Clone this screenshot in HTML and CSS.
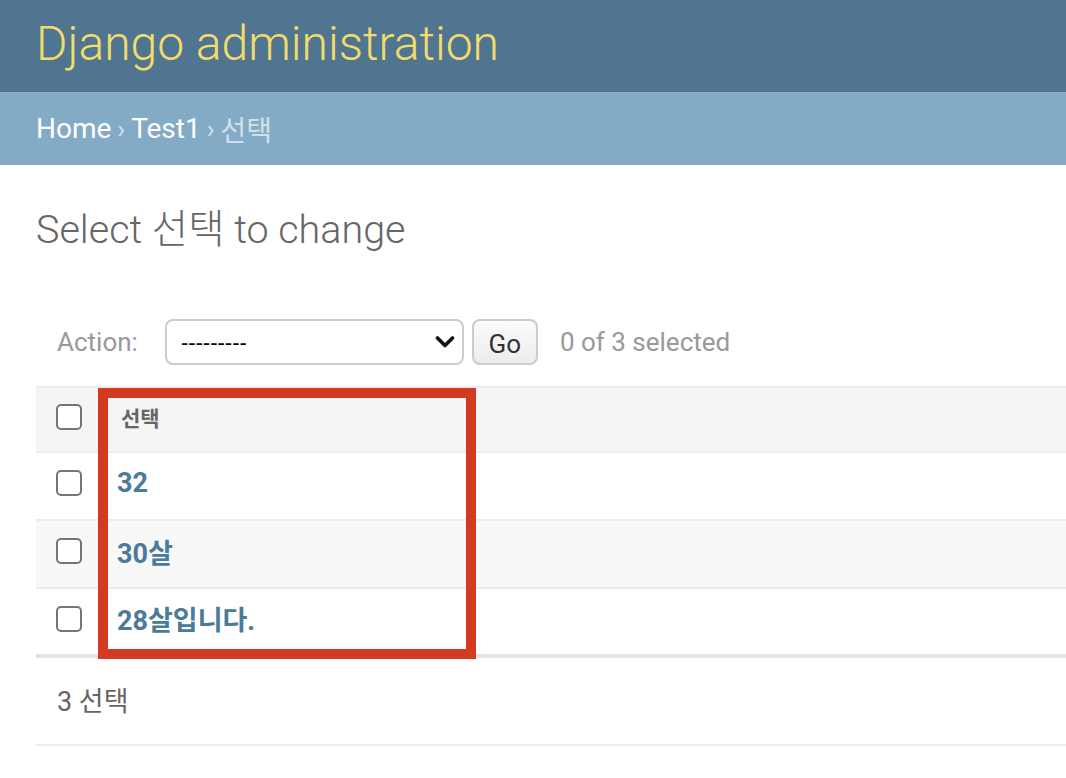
FILE: index.html
```html
<!DOCTYPE html>
<html lang="ko">
<head>
<meta charset="utf-8">
<title>Select 선택 to change | Django site admin</title>
<link rel="stylesheet" href="styles.css">
</head>
<body>
<header class="header">
  <div class="branding">Django administration</div>
</header>
<nav class="breadcrumbs">
  <a href="#">Home</a><span class="sep">›</span><a href="#">Test1</a><span class="sep">›</span><span class="current">선택</span>
</nav>
<main class="content">
  <h1 class="title">Select 선택 to change</h1>
  <div class="actions">
    <label class="action-label">Action:</label>
    <div class="select-wrap">
      <select class="action-select">
        <option>---------</option>
      </select>
      <svg class="chevron" viewBox="0 0 20 14" width="20" height="14" aria-hidden="true">
        <path d="M2.5 3 L10 10.5 L17.5 3" fill="none" stroke="#111" stroke-width="3.6" stroke-linecap="round" stroke-linejoin="round"/>
      </svg>
    </div>
    <button class="go">Go</button>
    <span class="counter">0 of 3 selected</span>
  </div>
  <div class="results">
    <table class="result-list">
      <thead>
        <tr>
          <th class="cb-cell"><input type="checkbox" class="cb"></th>
          <th class="name-head">선택</th>
        </tr>
      </thead>
      <tbody>
        <tr class="row1">
          <td class="cb-cell"><input type="checkbox" class="cb"></td>
          <td class="name-cell"><a href="#">32</a></td>
        </tr>
        <tr class="row2">
          <td class="cb-cell"><input type="checkbox" class="cb"></td>
          <td class="name-cell"><a href="#">30살</a></td>
        </tr>
        <tr class="row1 last">
          <td class="cb-cell"><input type="checkbox" class="cb"></td>
          <td class="name-cell"><a href="#">28살입니다.</a></td>
        </tr>
      </tbody>
    </table>
    <div class="highlight"></div>
  </div>
  <p class="paginator">3 선택</p>
</main>
</body>
</html>
```

FILE: styles.css
```css
html, body {
  margin: 0;
  padding: 0;
  background: #fff;
}
body {
  font-family: Roboto, "Noto Sans CJK KR", "Liberation Sans", sans-serif;
  color: #333;
  width: 1066px;
  overflow: hidden;
}
.header {
  height: 92px;
  background: #4f7591;
  display: flex;
  align-items: center;
  padding-left: 36px;
}
.branding {
  color: #f3dc6b;
  font-size: 48px;
  font-weight: 300;
  line-height: 1;
  margin-top: -4px;
}
.breadcrumbs {
  height: 73px;
  background: #84abc6;
  display: flex;
  align-items: center;
  padding-left: 36px;
  font-size: 28px;
  color: #fff;
}
.breadcrumbs a {
  color: #fff;
  text-decoration: none;
}
.breadcrumbs .sep {
  color: #d3e4ee;
  margin: 0 6px;
  font-size: 26px;
}
.breadcrumbs .current {
  color: #cfe0ea;
}
.content {
  padding: 38px 0 0 36px;
}
.title {
  margin: 0;
  font-size: 39.5px;
  font-weight: 300;
  line-height: 54px;
  color: #666;
}
.actions {
  margin-top: 62px;
  height: 46px;
  display: flex;
  align-items: center;
  padding-left: 21px;
  color: #999;
  font-size: 26px;
}
.action-label {
  margin-right: 27px;
}
.select-wrap {
  position: relative;
  width: 299px;
  height: 46px;
}
.action-select {
  appearance: none;
  -webkit-appearance: none;
  width: 100%;
  height: 100%;
  border: 2px solid #ccc;
  border-radius: 8px;
  background: #fff;
  padding: 0 14px;
  font-family: "Liberation Sans", sans-serif;
  font-size: 22px;
  color: #000;
  box-sizing: border-box;
}
.chevron {
  position: absolute;
  right: 9px;
  top: 16px;
}
.go {
  margin-left: 8px;
  width: 66px;
  height: 46px;
  border: 2px solid #ccc;
  border-radius: 8px;
  background: linear-gradient(#fbfbfb, #ececec);
  font-family: Roboto, sans-serif;
  font-size: 26px;
  color: #333;
  padding: 4px 0 0;
}
.counter {
  margin-left: 22px;
}
.results {
  position: relative;
  margin-top: 21px;
}
.result-list {
  width: 100%;
  border-collapse: collapse;
}
.result-list thead tr {
  background: #f5f5f5;
  height: 65px;
}
.result-list th, .result-list td {
  padding: 0 0 6px;
  text-align: left;
  vertical-align: middle;
}
.result-list thead th {
  border-top: 2px solid #ececec;
  border-bottom: 2px solid #ececec;
}
.result-list tbody tr {
  height: 68px;
}
.result-list tbody td {
  border-bottom: 2px solid #ececec;
}
.result-list tbody tr.last td {
  border-bottom: 4px solid #e4e4e4;
}
.row2 {
  background: #f8f8f8;
}
.cb-cell {
  width: 42px;
  padding-left: 20px !important;
}
.cb {
  appearance: none;
  -webkit-appearance: none;
  display: block;
  width: 26px;
  height: 26px;
  margin: 0;
  border: 2px solid #757575;
  border-radius: 5px;
  background: #fff;
  box-sizing: border-box;
}
.name-head {
  padding-left: 23px !important;
  font-size: 21px;
  font-weight: 700;
  color: #666;
}
.name-cell {
  padding-left: 19px !important;
}
.name-cell a {
  color: #4a7b99;
  font-weight: 700;
  font-size: 27px;
  text-decoration: none;
}
.highlight {
  position: absolute;
  left: 62px;
  top: 2px;
  width: 378px;
  height: 271px;
  border: 10px solid #d23a22;
  box-sizing: border-box;
  pointer-events: none;
}
.paginator {
  margin: 0;
  height: 88px;
  box-sizing: border-box;
  padding: 0 0 4px 21px;
  display: flex;
  align-items: center;
  font-size: 27px;
  color: #666;
  border-bottom: 2px solid #ececec;
}
```
